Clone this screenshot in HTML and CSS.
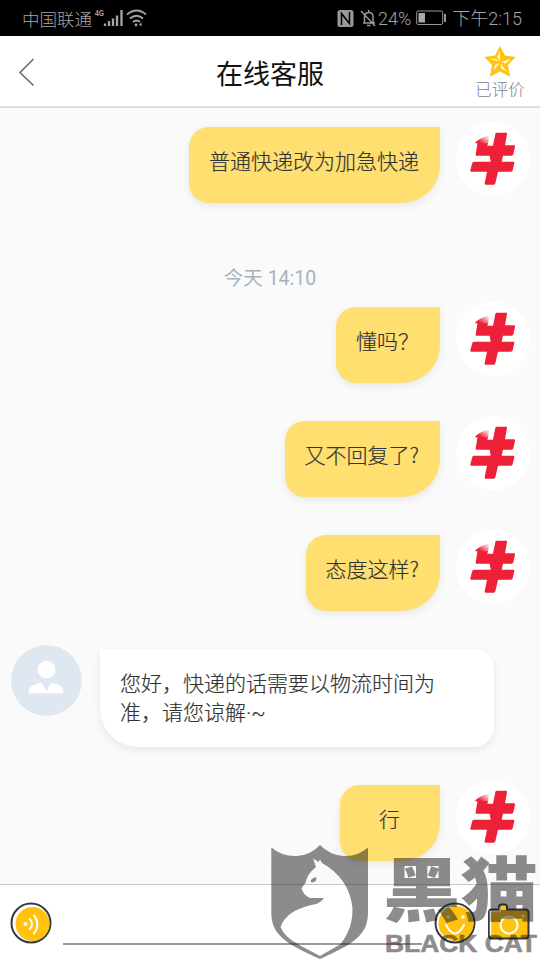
FILE: index.html
```html
<!DOCTYPE html>
<html lang="zh-CN">
<head>
<meta charset="utf-8">
<title>在线客服</title>
<link rel="stylesheet" href="styles.css">
</head>
<body>
<svg class="defs" aria-hidden="true">
  <defs>
    <linearGradient id="fade" gradientUnits="userSpaceOnUse" x1="92" y1="84" x2="112" y2="58">
      <stop offset="0" stop-color="#ee2037"/><stop offset="1" stop-color="#fff"/>
    </linearGradient>
    <symbol id="brand" viewBox="20 22 222 222">
      <path fill="#ee2037" d="M142 54H170Q174 54 173 58L167 92H194Q198 92 197 96L192 119Q191 123 187 123H161L157 141H192Q196 141 195 145L190 167Q189 171 185 171H146L138 206Q137 210 133 210H109Q105 210 106 206L113 171H66Q62 171 63 167L69 145Q70 141 74 141H124L121 123H82Q78 123 79 119L85 81H117L114 93H131L138 58Q139 54 142 54Z"/>
      <path fill="url(#fade)" d="M76 86Q92 68 120 62L116 86Z"/>
    </symbol>
  </defs>
</svg>
<div class="phone">
  <div class="status">
    <span class="carrier">中国联通</span>
    <svg class="signal" width="54" height="24" viewBox="0 0 54 24">
      <text class="net" x="2" y="10" textLength="9" lengthAdjust="spacingAndGlyphs">4G</text>
      <path d="M12 18.500v2.500M16 16v5M20 13.500v7.500M24 10.500v10.500M28.500 5v16" transform="translate(0 -1)" stroke="#a5a5a5" stroke-width="2.300" fill="none"/>
      <path d="M34 8.500q9.500-8 19 0M37 12.500q6.500-5.500 13 0M40 16q3.500-3 7 0" stroke="#a5a5a5" stroke-width="1.800" fill="none"/>
      <circle cx="43" cy="19" r="1.400" fill="#a5a5a5"/><path d="M46 18.500l2.500-2v4z" fill="#a5a5a5"/>
    </svg>
    <span class="grow"></span>
    <svg class="alerts" width="40" height="24" viewBox="0 0 40 24">
      <rect x="0.500" y="4" width="16" height="17" rx="2.500" fill="#999"/>
      <path d="M4.500 19V7.500l8 10V6" stroke="#000" stroke-width="1.500" fill="none"/>
      <path d="M26 17h12M27.500 17v-6c0-6 8.500-6 8.500 0v6M31.700 6V4M30 19.500h3.500M24 5l14 15" stroke="#999" stroke-width="1.500" fill="none"/>
    </svg>
    <span class="percent">24%</span>
    <svg class="battery" width="31" height="16" viewBox="0 0 31 16">
      <rect x="0.700" y="1" width="26" height="13.500" rx="1.500" fill="none" stroke="#999"/>
      <path d="M2.500 3h6.500v9.500H2.500z" fill="#aaa"/><path d="M29 4v8" stroke="#999" stroke-width="2"/>
    </svg>
    <span class="clock">下午2:15</span>
  </div>

  <header class="header">
    <svg class="back" width="18" height="30" viewBox="0 0 18 30"><path d="M15.500 2L2 15.500l13.500 13" stroke="#666" stroke-width="1.500" fill="none"/></svg>
    <h1>在线客服</h1>
    <div class="rated">
      <svg width="32" height="31" viewBox="0 0 32 31">
        <path d="M16 0l5 9.500 10.500 1.500-7.500 8 2 11.500-10-5-10 5 2-11.500L.5 11 11 9.500z" fill="#ffc20e"/>
        <path d="M16 4.500v11l-3-4.500zM17 15.500l10-2.500-5.500 5zM16.500 17l6.500 9-6-3.500zM15.500 17l-6 8 1.200-6zM15 15.500L5 13l6.500-.5z" fill="#fff5ca"/>
      </svg>
      <span>已评价</span>
    </div>
  </header>

  <main class="chat">
    <div class="row me"><div class="bubble">普通快递改为加急快递</div><div class="avatar"><svg><use href="#brand"/></svg></div></div>
    <div class="time">今天 14:10</div>
    <div class="row me"><div class="bubble">懂吗？</div><div class="avatar"><svg><use href="#brand"/></svg></div></div>
    <div class="row me"><div class="bubble">又不回复了?</div><div class="avatar"><svg><use href="#brand"/></svg></div></div>
    <div class="row me"><div class="bubble">态度这样?</div><div class="avatar"><svg><use href="#brand"/></svg></div></div>
    <div class="row agent">
      <div class="avatar"><svg viewBox="0 0 72 72"><circle cx="36" cy="25" r="9" fill="#fff"/><path d="M18 49v-3c0-5 8-6 13-8l5 9 5-9c5 2 12 3 12 8v3z" fill="#fff"/></svg></div>
      <div class="bubble">您好，快递的话需要以物流时间为<br>准，请您谅解<span class="latin">·~</span></div>
    </div>
    <div class="row me"><div class="bubble short">行</div><div class="avatar"><svg><use href="#brand"/></svg></div></div>
  </main>

  <footer class="composer">
    <svg class="voice" width="42" height="42" viewBox="0 0 42 42">
      <circle cx="21" cy="21" r="19.500" fill="#fff" stroke="#333b40" stroke-width="2"/>
      <circle cx="22.500" cy="22" r="17" fill="#ffc20e"/>
      <circle cx="15.500" cy="22" r="2" fill="#fff"/>
      <path d="M20 17q4 5 0 10M24 13.500q7 8.500 0 18" stroke="#fff" stroke-width="2" stroke-linecap="round" fill="none"/>
    </svg>
    <div class="field"></div>
    <svg class="smile" width="42" height="42" viewBox="0 0 42 42">
      <circle cx="21" cy="21" r="19.500" fill="#fff" stroke="#333b40" stroke-width="2"/>
      <circle cx="22" cy="21.500" r="17.500" fill="#ffc20e"/>
      <path d="M12 23q9 17 18 0" stroke="#fff" stroke-width="2" stroke-linecap="round" fill="none"/><circle cx="14" cy="15" r="1.800" fill="#fff"/><circle cx="29" cy="15" r="1.800" fill="#fff"/>
    </svg>
    <svg class="camera" width="42" height="40" viewBox="0 0 42 40">
      <path d="M3.500 6.500H11V4q0-2.500 2.500-2.500h3Q19 1.500 19 4v2.500h18.500q3 0 3 3v23q0 3-3 3h-34q-2.500 0-2.500-3v-23q0-3 2.500-3z" fill="#ffc20e" stroke="#333b40" stroke-width="2"/>
      <path d="M2.500 33V8.500H12V4" fill="none" stroke="#fff" stroke-width="1.500"/>
      <circle cx="21" cy="22" r="8.500" fill="none" stroke="#fff" stroke-width="2"/><circle cx="35" cy="13" r="1.600" fill="#fff"/>
    </svg>
  </footer>

  <svg class="watermark" width="280" height="120" viewBox="0 0 280 120">
    <path fill-rule="evenodd" d="M11.300 7.500Q23 17 37 16Q51 15 60 5Q70 15 83 16Q97 17 108 7.500V72C108 94 96 103 60 119C24 103 11.300 94 11.300 72Z
      M53 18.500L56 27Q47 34 45.500 43L41.500 48Q43 55 50 58L64 58Q60 64 51 65Q26 71 20.500 87Q24 97 41 106L60 116L80 104.500Q93 89 92.500 68Q89 38 62 23L60 19.500L58.500 22Z"/>
    <path d="M50.500 41q2-4 6-3.500 0 5-5 5z"/>
    <text class="wm-cn" x="123" y="76" textLength="155" lengthAdjust="spacingAndGlyphs">黑猫</text>
    <text class="wm-en" x="125" y="112" textLength="152" lengthAdjust="spacingAndGlyphs">BLACK CAT</text>
  </svg>
</div>
</body>
</html>
```
FILE: styles.css
```css
* { box-sizing: border-box; }
body {
  margin: 0;
  font-family: "Noto Sans CJK SC", sans-serif;
  font-weight: 300;
  color: #333;
}
.defs { position: absolute; width: 0; height: 0; }
.phone {
  position: relative;
  display: flex;
  flex-direction: column;
  width: 540px;
  height: 960px;
  overflow: hidden;
  background: #fafafa;
}
.status {
  display: flex;
  align-items: center;
  flex: 0 0 36px;
  padding: 0 18px 0 22px;
  background: #000;
  color: #a5a5a5;
  font-size: 17.5px;
  line-height: 30px;
}
.carrier { padding-top: 2px; }
.net { font: bold 9px "Liberation Sans", sans-serif; fill: #a5a5a5; }
.signal { margin-left: 1px; }
.alerts { margin-right: -2px; }
.grow { flex: 1; }
.percent, .clock {
  padding-top: 2px;
  font-family: Roboto, "Noto Sans CJK SC", sans-serif;
  font-size: 18px;
}
.percent { margin-left: 3px; }
.battery { margin: 0 5px; }
.header {
  display: grid;
  grid-template-columns: 80px 1fr 80px;
  align-items: center;
  flex: 0 0 72px;
  background: #fff;
  border-bottom: 2px solid #e0e0e0;
}
.back { margin: 2px 0 0 18px; }
h1 {
  margin: 0;
  padding-top: 3px;
  text-align: center;
  font-size: 27px;
  font-weight: 400;
  line-height: 40px;
  color: #111;
}
.rated {
  display: flex;
  flex-direction: column;
  align-items: center;
  padding-top: 4px;
  font-size: 16.5px;
  line-height: 24px;
  color: #7b828c;
}
.chat {
  display: flex;
  flex: 1;
  flex-direction: column;
  gap: 33px;
  padding-top: 14px;
}
.row { display: flex; align-items: flex-start; }
.me { justify-content: flex-end; gap: 16px; padding-right: 10px; }
.agent { gap: 17px; padding-left: 10px; }
.bubble {
  margin-top: 5px;
  padding: 19px 21px 28px 20px;
  border-radius: 20px 0 38px 20px;
  background: #ffdf70;
  box-shadow: 0 3px 8px rgba(0, 0, 0, .08);
  font-size: 21px;
  line-height: 29px;
  -webkit-text-stroke: .2px #333;
}
.agent .bubble {
  width: 394px;
  padding-bottom: 21px;
  border-radius: 0 20px 20px 38px;
  background: #fff;
  white-space: nowrap;
}
.bubble.short { padding-left: 39px; padding-right: 40px; }
.latin { font-family: Roboto, sans-serif; line-height: 1; }
.avatar {
  width: 74px;
  height: 74px;
  border-radius: 50%;
  background: #fff;
}
.avatar svg { display: block; width: 74px; height: 74px; }
.agent .avatar {
  width: 73px;
  height: 73px;
  border: 1px solid #fff;
  background: #dfe8f1;
}
.agent .avatar svg { width: 71px; height: 71px; }
.time {
  margin: 26px 0 -26px;
  font-family: Roboto, "Noto Sans CJK SC", sans-serif;
  font-size: 19.5px;
  font-weight: 400;
  line-height: 33px;
  text-align: center;
  color: #a6b2be;
}
.composer {
  display: flex;
  align-items: flex-start;
  flex: 0 0 76px;
  padding: 17px 10px 0 10px;
  background: #fff;
  border-top: 1px solid #c8c8c8;
}
.field { flex: 1; height: 43px; margin: 0 12px 0 11px; border-bottom: 2px solid #999; }
.camera { margin: 1px 0 0 12px; }
.watermark {
  position: absolute;
  left: 260px;
  top: 840px;
  fill: #1e1a1a;
  opacity: .5;
}
.wm-cn { font: 900 70px "Noto Sans CJK SC", sans-serif; }
.wm-en { font: bold 23px "Liberation Sans", sans-serif; stroke: #1e1a1a; stroke-width: .6px; }
```
